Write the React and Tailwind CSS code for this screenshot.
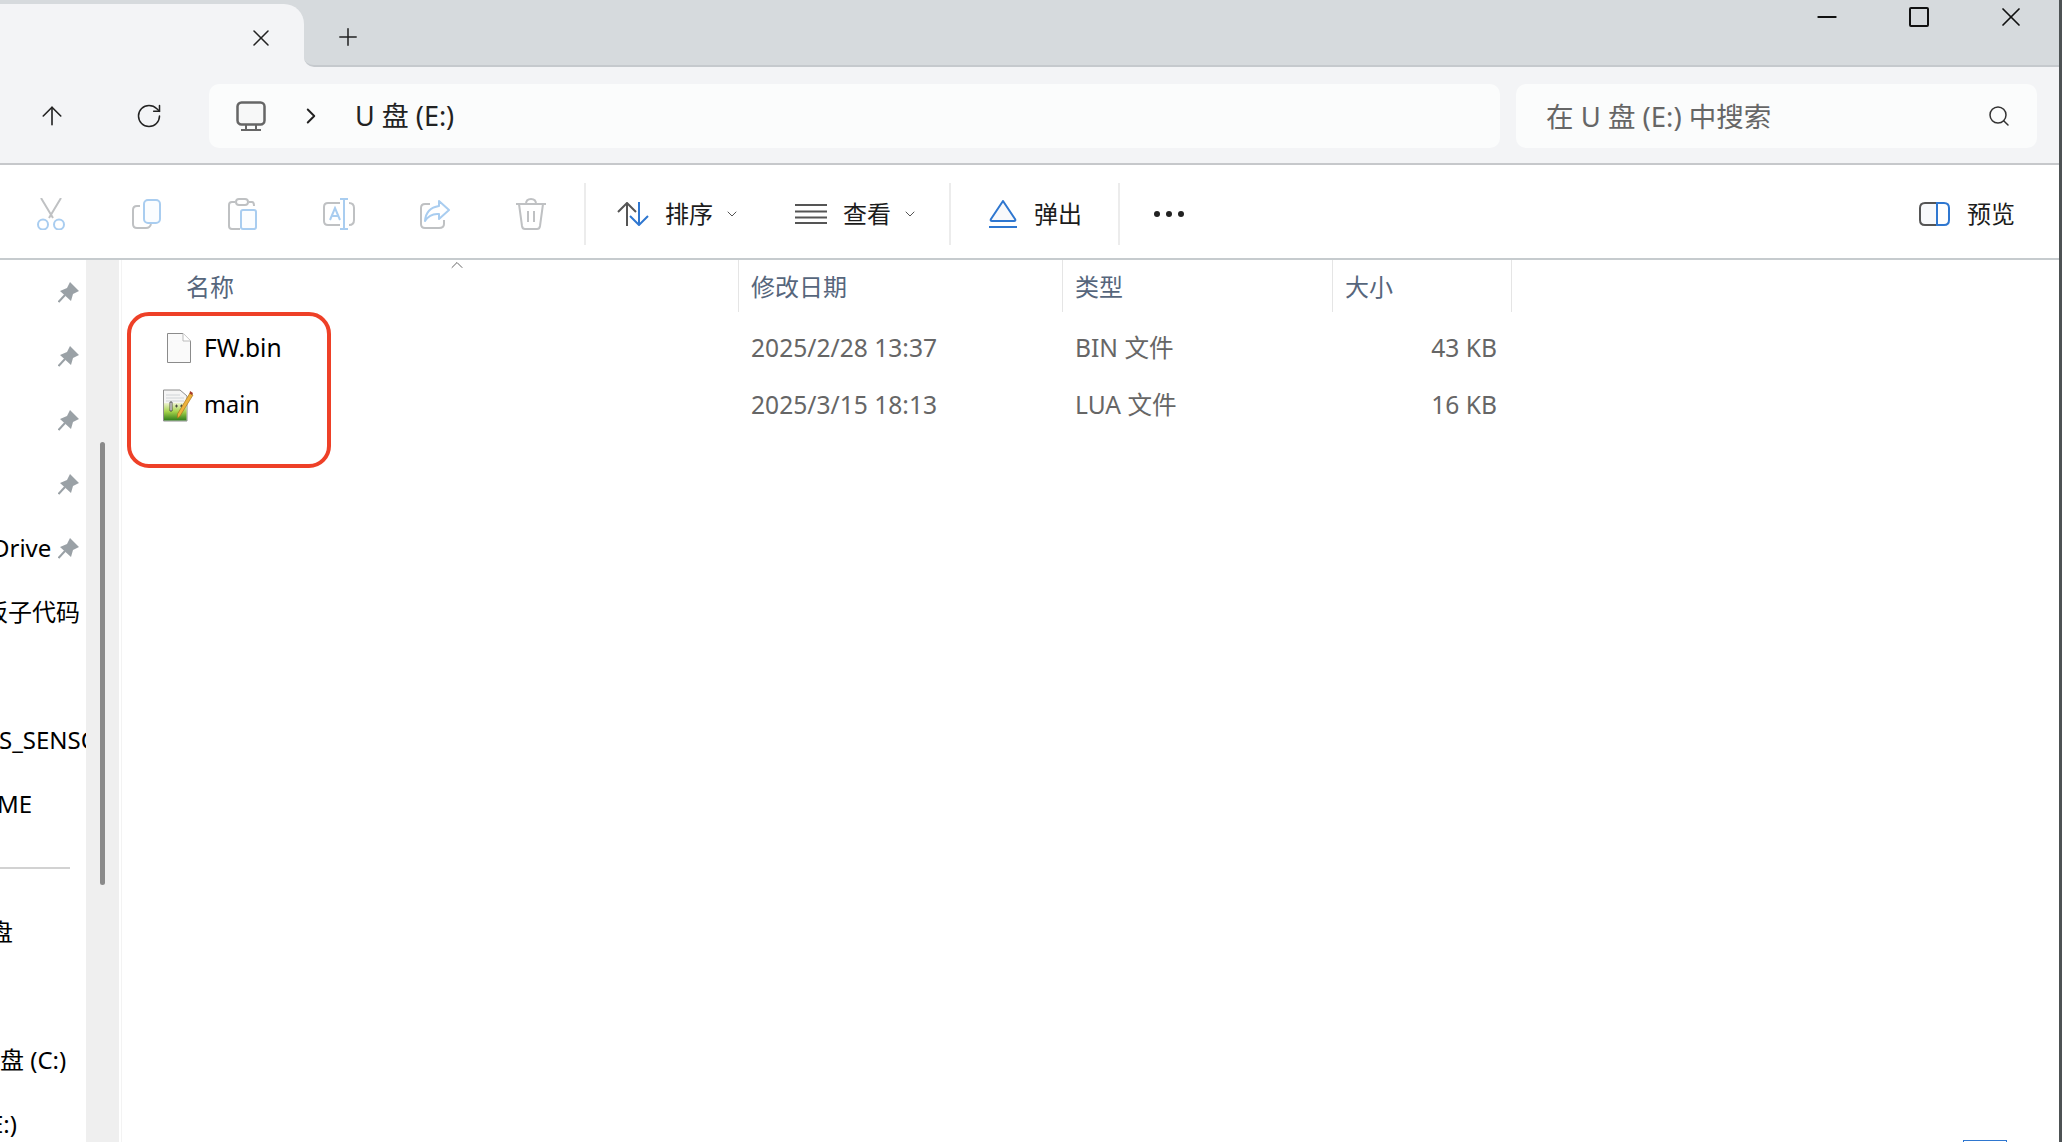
import { ArrowUp, RotateCw, ChevronRight, ChevronDown, Search, X, Plus, Minus, ChevronUp } from "lucide-react";

const font = { fontFamily: '"Noto Sans", "Noto Sans CJK SC", sans-serif' };
const GRAY = "#bfc1c3";
const BLUE = "#a9cdf0";

function CutIcon() {
  return (
    <svg width="30" height="32" viewBox="0 0 30 32" fill="none" strokeWidth="2">
      <path d="M5 0 L17 20 M25 0 L13 20" stroke={GRAY} />
      <circle cx="7" cy="26.5" r="5" stroke={BLUE} />
      <circle cx="23" cy="26.5" r="5" stroke={BLUE} />
    </svg>
  );
}

function CopyIcon() {
  return (
    <svg width="30" height="30" viewBox="0 0 30 30" fill="none" strokeWidth="2">
      <path d="M8 7 H5 Q1 7 1 11 V25 Q1 29 5 29 H14 Q18 29 19 25" stroke={GRAY} />
      <rect x="12" y="1" width="16" height="23" rx="4" stroke={BLUE} fill="#fbfdff" />
    </svg>
  );
}

function PasteIcon() {
  return (
    <svg width="30" height="32" viewBox="0 0 30 32" fill="none" strokeWidth="2">
      <path d="M7 4 H4 Q1 4 1 7 V28 Q1 31 4 31 H12 M21 4 H24 Q26 4 26 8" stroke={GRAY} />
      <rect x="8" y="1" width="12" height="6" rx="3" stroke={GRAY} />
      <rect x="13" y="12" width="15" height="19" rx="2" stroke={BLUE} fill="#fbfdff" />
    </svg>
  );
}

function RenameIcon() {
  return (
    <svg width="32" height="32" viewBox="0 0 32 32" fill="none" strokeWidth="2">
      <path d="M17 5 H5 Q1 5 1 9 V23 Q1 27 5 27 H17 M26 5 Q31 5 31 10 V22 Q31 27 26 27" stroke={GRAY} />
      <path d="M7 22 L12 10 L17 22 M8.5 18 H15.5" stroke={BLUE} />
      <path d="M17 1 H25 M21 1 V31 M17 31 H25" stroke={BLUE} />
    </svg>
  );
}

function ShareIcon() {
  return (
    <svg width="30" height="30" viewBox="0 0 30 30" fill="none" strokeWidth="2">
      <path d="M10 5 H5 Q1 5 1 9 V25 Q1 29 5 29 H19 Q24 29 24 25 V21" stroke={GRAY} />
      <path d="M19 2 L29 11 L19 20 V15 Q10 14 5 22 Q6 9 19 7 Z" stroke={BLUE} strokeLinejoin="round" />
    </svg>
  );
}

function TrashIcon() {
  return (
    <svg width="30" height="32" viewBox="0 0 30 32" fill="none" stroke={GRAY} strokeWidth="2">
      <path d="M0 6 H30 M10 6 Q10 1 15 1 Q20 1 20 6" />
      <path d="M3 6 L6 28 Q6.5 31 9 31 H21 Q23.5 31 24 28 L27 6" />
      <path d="M12 13 V24 M18 13 V24" />
    </svg>
  );
}

function SortIcon() {
  return (
    <svg width="32" height="24" viewBox="0 0 32 24" fill="none" strokeWidth="2">
      <path d="M10 24 V1 M1 10 L10 1 L19 10" stroke="#555" />
      <path d="M22 0 V23 M13 14 L22 23 L31 14" stroke="#2f77d0" />
    </svg>
  );
}

function ViewIcon() {
  return (
    <svg width="32" height="20" viewBox="0 0 32 20" stroke="#555" strokeWidth="2">
      <path d="M0 1 H32 M0 7.5 H32 M0 13.5 H32 M0 19 H32" />
    </svg>
  );
}

function EjectIcon() {
  return (
    <svg width="28" height="28" viewBox="0 0 28 28" fill="none" stroke="#2f77d0" strokeWidth="2">
      <path d="M14 1 L26 19 Q27 21 25 21 H3 Q1 21 2 19 Z" strokeLinejoin="round" fill="#f8f9fb" />
      <path d="M0 27 H28" />
    </svg>
  );
}

function PreviewIcon() {
  return (
    <svg width="31" height="24" viewBox="0 0 31 24" fill="none" strokeWidth="2">
      <path d="M18 1 H6 Q1 1 1 6 V18 Q1 23 6 23 H18" stroke="#555" fill="#f8f9fb" />
      <path d="M18 1 H25 Q30 1 30 6 V18 Q30 23 25 23 H18 Z" stroke="#2f77d0" />
    </svg>
  );
}

function MonitorIcon() {
  return (
    <svg width="30" height="30" viewBox="0 0 30 30" fill="none" stroke="#666" strokeWidth="2.500">
      <rect x="1.500" y="1.500" width="27" height="22" rx="4" fill="#f7f8f8" />
      <path d="M10 24 V29 M20 24 V29 M5 29 H25" strokeWidth="2" />
    </svg>
  );
}

function PinIcon() {
  return (
    <svg width="21" height="21" viewBox="0 0 21 21" fill="#9aa1a6" className="ml-auto mr-[7px] shrink-0">
      <path d="M12 0 L21 9 L17 11 L15 12 L13 19 L2 9 L9 6 L10 4 Z" />
      <path d="M7 13 L0.500 20" stroke="#9aa1a6" strokeWidth="2" />
    </svg>
  );
}

function FileIcon() {
  return (
    <svg width="24" height="30" viewBox="0 0 24 30" fill="#fafafa" stroke="#8b8b8b" strokeWidth="1">
      <path d="M0.500 0.500 H16 L23.500 8 V29.500 H0.500 Z" />
      <path d="M16 0.500 V8 H23.500" fill="#fff" stroke="#bbb" />
    </svg>
  );
}

function LuaIcon() {
  return (
    <svg width="31" height="33" viewBox="0 0 31 33" fill="none">
      <defs>
        <linearGradient id="luaFill" x1="0" y1="0" x2="0" y2="1">
          <stop offset="0" stopColor="#eef3d0" />
          <stop offset="0.500" stopColor="#a4d24a" />
          <stop offset="1" stopColor="#2f7d1a" />
        </linearGradient>
      </defs>
      <path d="M0.500 1 H17 L24 7 V32 H0.500 Z" fill="#f5f5f5" stroke="#8e8e8e" />
      <path d="M3 6 H17 M3 9 H21 M3 12 H21" stroke="#cfd3d6" />
      <rect x="1" y="14" width="22.500" height="17.500" fill="url(#luaFill)" />
      <path d="M7 22 V13 H9 V22 Z" fill="#fff" stroke="#333" strokeWidth="0.800" />
      <path d="M12 17 H15 M13.500 15.500 V18.500 M17 17 H20 M18.500 15.500 V18.500" stroke="#333" strokeWidth="0.800" />
      <path d="M27 4 L30 6 L17 27 L14.500 29 L14.500 25 Z" fill="#eeb23c" stroke="#a8761c" strokeWidth="0.700" />
      <path d="M27 2 L30 4 L29 6 L26.500 4.500 Z" fill="#a63a2a" />
    </svg>
  );
}

const sideRows = [
  { pin: true },
  { pin: true },
  { pin: true },
  { pin: true },
  { text: "Drive", ml: "-ml-[8px]", pin: true },
  { text: "板子代码", ml: "-ml-[16px]" },
  {},
  { text: "S_SENSOR", ml: "-ml-[1px]" },
  { text: "ME", ml: "-ml-[3px]" },
  { line: true },
  { text: "盘", ml: "-ml-[11px]" },
  {},
  { text: "盘 (C:)", ml: "ml-0" },
  { text: "E:)", ml: "-ml-[10px]" },
];

function Sidebar() {
  return (
    <div className="w-[86px] shrink-0 overflow-hidden text-[24px] text-black">
      {sideRows.map((r, i) => (
        <div key={i} className="h-16 flex items-center">
          {r.text && <span className={`${r.ml} mb-[1px] whitespace-nowrap shrink-0`}>{r.text}</span>}
          {r.pin && <PinIcon />}
          {r.line && <div className="w-[70px] h-[2px] bg-[#d2d2d2]" />}
        </div>
      ))}
    </div>
  );
}

const toolButtons = [CutIcon, CopyIcon, PasteIcon, RenameIcon, ShareIcon, TrashIcon];

function ToolSep({ className }) {
  return <div className={`w-[2px] h-[62px] bg-[#ececec] shrink-0 ${className}`} />;
}

function Toolbar() {
  return (
    <div className="h-[95px] shrink-0 bg-white border-b-[2px] border-[#c6cbce] flex items-center pt-[5px] pl-[3px] text-[24px] text-[#1c1c1c]">
      {toolButtons.map((Icon, i) => (
        <div key={i} className="w-24 flex justify-center shrink-0">
          <Icon />
        </div>
      ))}
      <ToolSep className="ml-[5px]" />
      <div className="ml-[31px] flex items-center">
        <SortIcon />
        <span className="ml-[16px]">排序</span>
        <ChevronDown className="ml-[11px] size-[16px] text-[#555]" strokeWidth={1.5} />
      </div>
      <div className="ml-[55px] flex items-center">
        <ViewIcon />
        <span className="ml-[16px]">查看</span>
        <ChevronDown className="ml-[11px] size-[16px] text-[#555]" strokeWidth={1.5} />
      </div>
      <ToolSep className="ml-[31px]" />
      <div className="ml-[38px] flex items-center">
        <EjectIcon />
        <span className="ml-[17px]">弹出</span>
      </div>
      <ToolSep className="ml-[36px]" />
      <div className="ml-[34px] flex gap-[6px]">
        <span className="size-[6px] rounded-full bg-[#222]" />
        <span className="size-[6px] rounded-full bg-[#222]" />
        <span className="size-[6px] rounded-full bg-[#222]" />
      </div>
      <div className="ml-auto mr-[44px] flex items-center">
        <PreviewIcon />
        <span className="ml-[17px]">预览</span>
      </div>
    </div>
  );
}

const columns = "grid grid-cols-[616px_324px_270px_180px]";

function FileList() {
  return (
    <div className="relative flex-1 text-[24px]">
      <div className={`${columns} h-[52px] items-center text-[#56667c]`}>
        <div className="pl-[64px] pt-[1px] h-full flex items-center">名称</div>
        <div className="pl-[12px] pt-[1px] h-full flex items-center border-l-[1px] border-[#e5e5e5]">修改日期</div>
        <div className="pl-[12px] pt-[1px] h-full flex items-center border-l-[1px] border-[#e5e5e5]">类型</div>
        <div className="pl-[12px] pt-[1px] h-full flex items-center border-x-[1px] border-[#e5e5e5]">大小</div>
      </div>
      <ChevronUp className="absolute left-[325px] top-[-5px] size-[20px] text-[#666]" strokeWidth={1.2} />

      <div className="mt-[7.500px] text-[24.600px]">
        <div className={`${columns} h-[57px] items-center text-[#666]`}>
          <div className="flex items-center text-black">
            <div className="w-[82px] flex justify-end pr-[13px]">
              <FileIcon />
            </div>
            <span>FW.bin</span>
          </div>
          <div className="pl-[13px]">2025/2/28 13:37</div>
          <div className="pl-[13px]">BIN 文件</div>
          <div className="pr-[15px] text-right">43 KB</div>
        </div>
        <div className={`${columns} h-[57px] items-center text-[#666]`}>
          <div className="flex items-center text-black">
            <div className="w-[82px] flex justify-end pr-[10px]">
              <LuaIcon />
            </div>
            <span className="text-[23.500px]">main</span>
          </div>
          <div className="pl-[13px]">2025/3/15 18:13</div>
          <div className="pl-[13px]">LUA 文件</div>
          <div className="pr-[15px] text-right">16 KB</div>
        </div>
      </div>

      {/* red callout drawn over the file names */}
      <div className="absolute left-[5px] top-[52px] w-[204px] h-[156px] rounded-[22px] border-[4.500px] border-[#ee4027]" />
      {/* edge of a selection box cut off by the bottom of the shot */}
      <div className="absolute left-[1841px] bottom-0 w-[44px] h-[2px] border-[1px] border-b-0 border-[#2f77d0]" />
    </div>
  );
}

export default function App() {
  return (
    <div
      className="w-[2062px] h-[1142px] flex flex-col overflow-hidden bg-white border-r-[3px] border-[#4d5254]"
      style={font}
    >
      {/* tab strip */}
      <div className="h-[67px] shrink-0 flex bg-[#f3f4f6]">
        <div className="w-[304px] shrink-0 bg-[#d6dadd]">
          <div className="mt-[4px] h-[63px] bg-[#f3f4f6] rounded-tr-[20px] flex justify-end pt-[20px] pr-[29px]">
            <X className="size-[28px] text-[#222]" strokeWidth={1.3} />
          </div>
        </div>
        <div className="flex-1 bg-[#d6dadd] border-b-[2px] border-[#c5c9cd] rounded-bl-[10px] flex">
          <Plus className="ml-[30px] mt-[23px] size-[28px] text-[#222]" strokeWidth={1.3} />
          <div className="ml-auto mr-[2px] flex h-[34px]">
            <div className="w-[92px] flex items-center justify-center">
              <Minus className="size-[30px] text-[#111]" strokeWidth={1.5} />
            </div>
            <div className="w-[92px] flex items-center justify-center">
              <div className="w-[20px] h-[20px] rounded-[2px] border-[2px] border-[#111]" />
            </div>
            <div className="w-[92px] flex items-center justify-center">
              <X className="size-[32px] text-[#111]" strokeWidth={1.3} />
            </div>
          </div>
        </div>
      </div>

      {/* nav row */}
      <div className="h-[98px] shrink-0 bg-[#f3f4f6] border-b-[2px] border-[#c6c8cb] flex items-start pt-[17px] pl-[4px] pr-[22px]">
        <div className="w-24 h-16 flex items-center justify-center">
          <ArrowUp className="size-[30px] text-[#222]" strokeWidth={1.3} />
        </div>
        <div className="w-24 h-16 flex items-center justify-center pl-[1px]">
          <RotateCw className="size-[28px] text-[#222]" strokeWidth={1.3} />
        </div>
        <div className="ml-[13px] flex-1 h-16 bg-[#fbfcfc] rounded-[10px] flex items-center pl-[27px] text-[27px] text-[#222]">
          <MonitorIcon />
          <ChevronRight className="ml-[32px] size-[26px] text-[#222]" strokeWidth={1.8} />
          <span className="ml-[31px]">U 盘 (E:)</span>
        </div>
        <div className="ml-[16px] w-[521px] h-16 bg-[#fbfcfc] rounded-[10px] flex items-center pl-[30px] pr-[26px] text-[27.500px] text-[#666]">
          <span className="pt-[2px]">在 U 盘 (E:) 中搜索</span>
          <Search className="ml-auto size-[24px] text-[#333]" strokeWidth={1.5} />
        </div>
      </div>

      <Toolbar />

      <div className="flex-1 flex min-h-0">
        <Sidebar />
        <div className="w-[33px] shrink-0 bg-[#efefef] pl-[14px] pt-[182px]">
          <div className="w-[5px] h-[443px] rounded-full bg-[#8a8a8a]" />
        </div>
        <div className="w-[3px] shrink-0 border-r-[1px] border-[#f3f3f3]" />
        <FileList />
      </div>
    </div>
  );
}
